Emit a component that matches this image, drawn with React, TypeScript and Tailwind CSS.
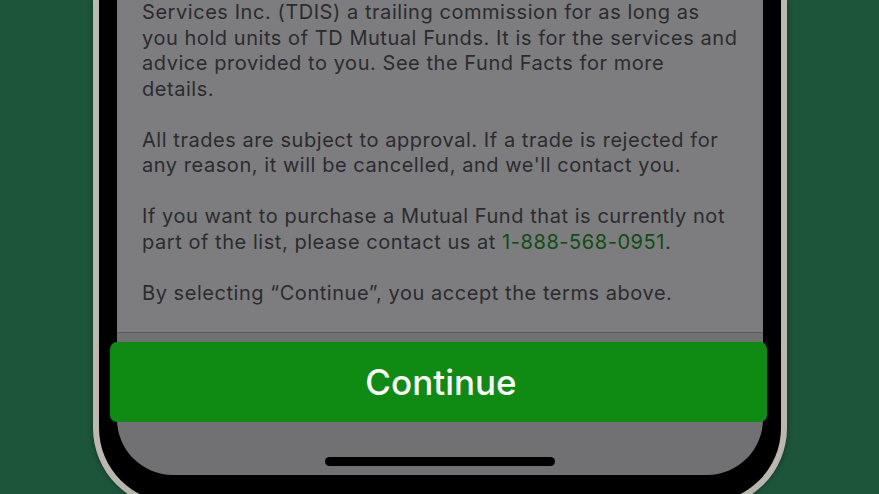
import React from 'react';

// lines are broken where the app breaks them
const paragraphs: React.ReactNode[][] = [
  [
    'Services Inc. (TDIS) a trailing commission for as long as',
    'you hold units of TD Mutual Funds. It is for the services and',
    'advice provided to you. See the Fund Facts for more',
    'details.',
  ],
  [
    'All trades are subject to approval. If a trade is rejected for',
    "any reason, it will be cancelled, and we'll contact you.",
  ],
  [
    'If you want to purchase a Mutual Fund that is currently not',
    <>
      part of the list, please contact us at <span className="text-[#0c4d10]">1-888-568-0951</span>.
    </>,
  ],
  ['By selecting \u201cContinue\u201d, you accept the terms above.'],
];

export default function App() {
  return (
    <div className="h-[494px] w-[879px] overflow-hidden bg-[#1d553a] font-['Inter','Liberation_Sans',sans-serif]">
      {/* phone frame */}
      <div className="ml-[93px] w-[694px] h-[508px] rounded-b-[80px] bg-gradient-to-r from-[#bdb8b2] via-[#8f8a85] to-[#bdb8b2] px-[6px] pb-[6px] shadow-[0_0_6px_rgba(0,0,0,0.35)]">
        <div className="h-full rounded-b-[74px] bg-black px-[18px] pb-[27px]">
          {/* screen */}
          <div className="h-[475px] rounded-b-[56px] bg-[#717174] flex flex-col">
            <div className="h-[332px] bg-[#7d7d80] pl-[25px] text-[20px] leading-[25.5px] text-[#2b2b2e] tracking-[0.55px] whitespace-nowrap">
              {paragraphs.map((lines, i) => (
                <p key={i} className={i > 0 ? 'mt-[25.5px]' : ''}>
                  {lines.map((l, j) => (
                    <span key={j} className="block">
                      {l}
                    </span>
                  ))}
                </p>
              ))}
            </div>
            <div className="h-px bg-[#5c5c5f]" />
            <button className="ml-[-7px] mr-[-4px] mt-[9px] h-[80px] rounded-[7px] bg-[#0f8a12] pl-[5px] text-white text-[35px] font-medium">
              Continue
            </button>
            <div className="mt-[35px] flex justify-center">
              <div className="h-[9px] w-[230px] rounded-full bg-black" />
            </div>
          </div>
        </div>
      </div>
    </div>
  );
}
